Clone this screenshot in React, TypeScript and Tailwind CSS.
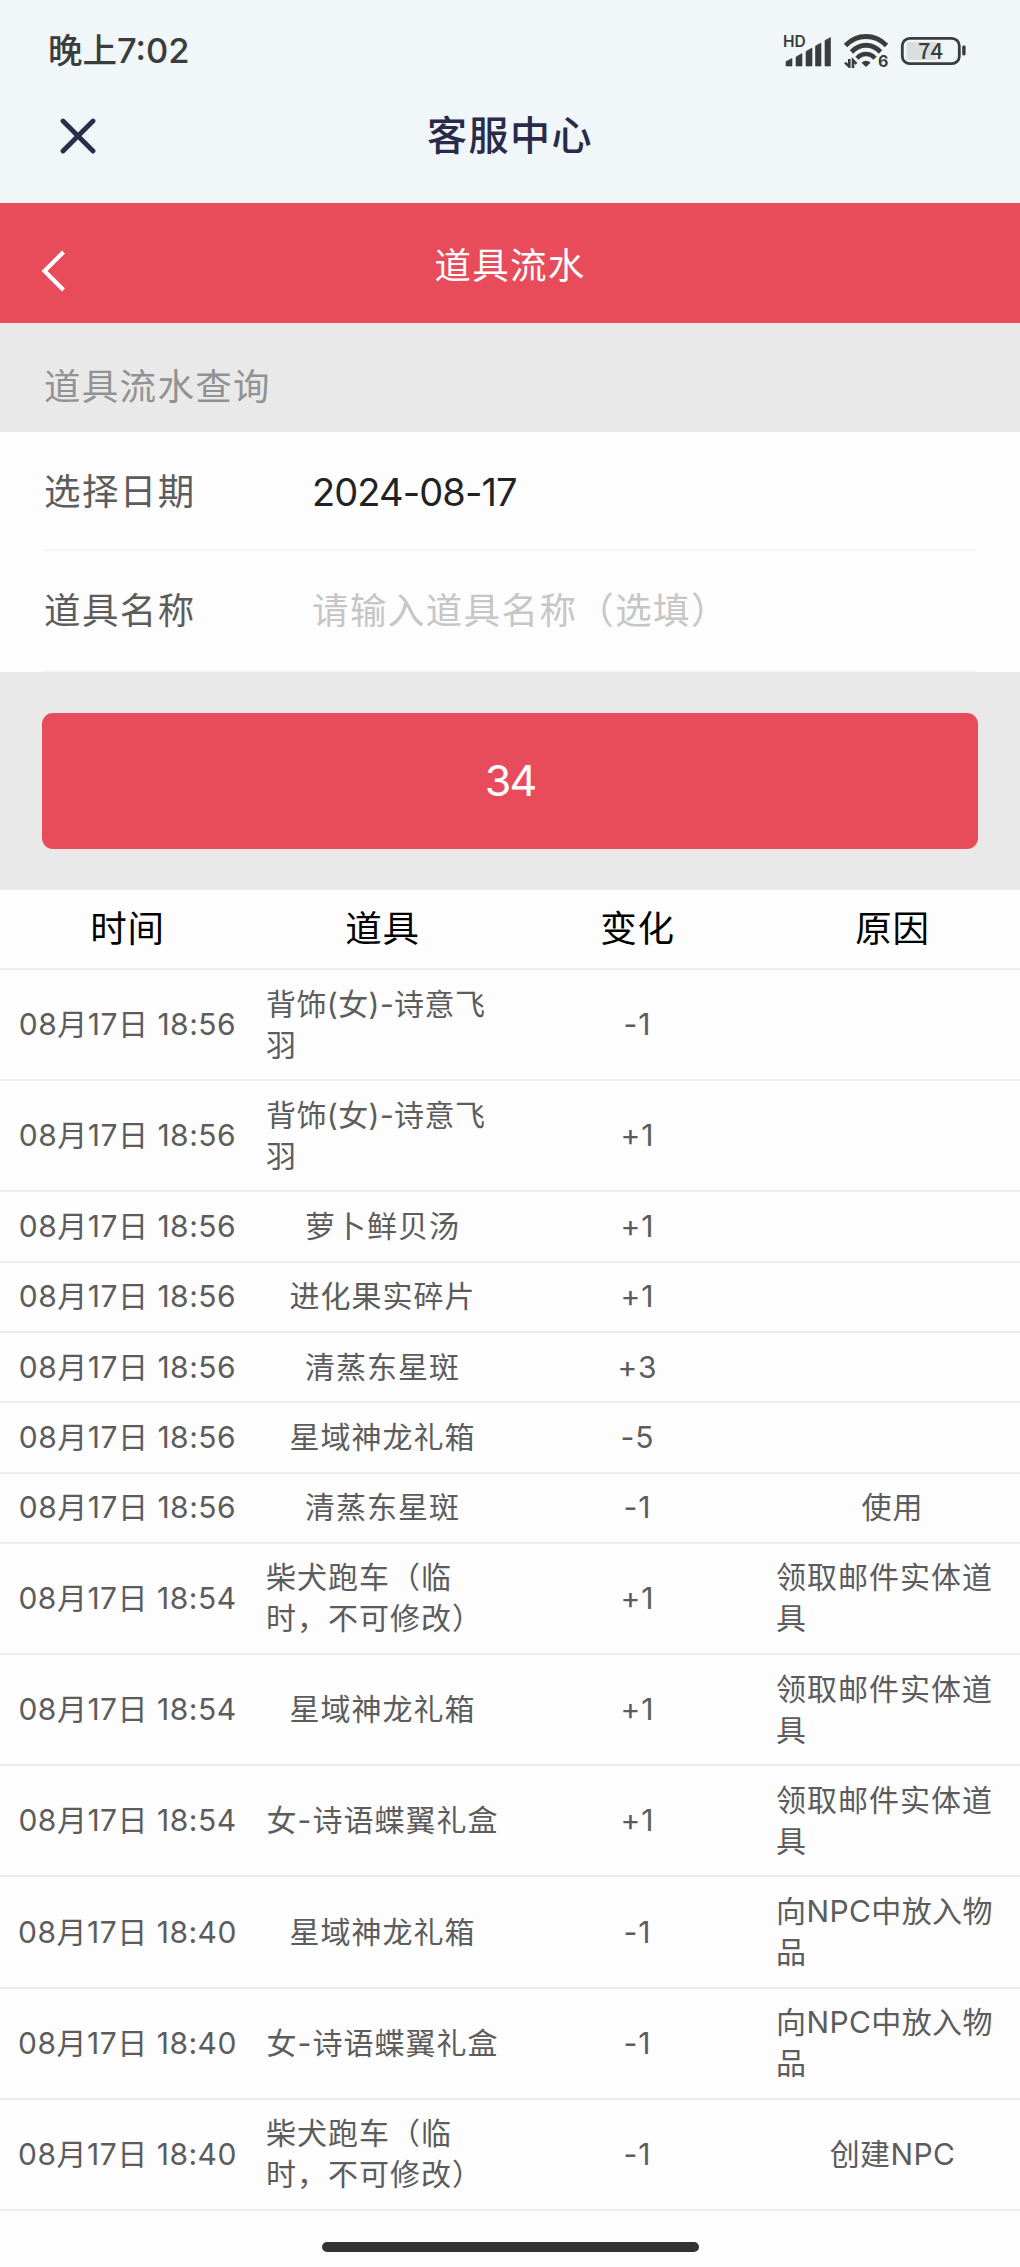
interface Registro {
  fecha:   string
  objeto:  string
  cambio:  string
  motivo?: string
}

const COLUMNAS = ['时间', '道具', '变化', '原因']

const REGISTROS: Registro[] = [
  { fecha: '08月17日 18:56', objeto: '背饰(女)-诗意飞\n羽', cambio: '-1' },
  { fecha: '08月17日 18:56', objeto: '背饰(女)-诗意飞\n羽', cambio: '+1' },
  { fecha: '08月17日 18:56', objeto: '萝卜鲜贝汤', cambio: '+1' },
  { fecha: '08月17日 18:56', objeto: '进化果实碎片', cambio: '+1' },
  { fecha: '08月17日 18:56', objeto: '清蒸东星斑', cambio: '+3' },
  { fecha: '08月17日 18:56', objeto: '星域神龙礼箱', cambio: '-5' },
  { fecha: '08月17日 18:56', objeto: '清蒸东星斑', cambio: '-1', motivo: '使用' },
  { fecha: '08月17日 18:54', objeto: '柴犬跑车（临\n时，不可修改）', cambio: '+1', motivo: '领取邮件实体道\n具' },
  { fecha: '08月17日 18:54', objeto: '星域神龙礼箱', cambio: '+1', motivo: '领取邮件实体道\n具' },
  { fecha: '08月17日 18:54', objeto: '女-诗语蝶翼礼盒', cambio: '+1', motivo: '领取邮件实体道\n具' },
  { fecha: '08月17日 18:40', objeto: '星域神龙礼箱', cambio: '-1', motivo: '向NPC中放入物\n品' },
  { fecha: '08月17日 18:40', objeto: '女-诗语蝶翼礼盒', cambio: '-1', motivo: '向NPC中放入物\n品' },
  { fecha: '08月17日 18:40', objeto: '柴犬跑车（临\n时，不可修改）', cambio: '-1', motivo: '创建NPC' },
]

function Senal() {
  return (
    <div className="relative h-[34px] w-[48px] text-[#3a3d3c]">
      <svg width="48" height="34" viewBox="0 0 48 34" fill="currentColor">
        <path d="M2 32V27.5L8 24.5V32Z M12 32V23L18 19.5V32Z M22 32V17.5L28 14V32Z M31.5 32V12L37 9V32Z M41 32V6.5L46.5 3.5V32Z" stroke="currentColor" strokeWidth="0.6" strokeLinejoin="round" />
      </svg>
      <span className="absolute -left-px -top-px text-[15.5px] font-semibold leading-[18px]">HD</span>
    </div>
  )
}

function Wifi() {
  return (
    <div className="relative h-[34px] w-[46px] text-[#3a3d3c]">
      <svg width="46" height="34" viewBox="0 0 46 34" fill="none" stroke="currentColor">
        <path d="M2.5 11.5C14 -0.5 32 -0.5 43.5 11.5" strokeWidth="4.8" />
        <path d="M8.5 18C17 9 29 9 37.5 18" strokeWidth="4.8" />
        <path d="M14 24.2C19 18.5 27 18.5 32 24.2" strokeWidth="4.6" />
        <path d="M18.5 28.7C21 26 25 26 27.5 28.7L23 33Z" fill="currentColor" stroke="none" />
        <path d="M6.3 25V32.6L2 28.6 M10 34V26.2L13.5 29.8" strokeWidth="2.6" />
      </svg>
      <span className="absolute left-[35px] top-[18px] text-[16px] font-bold leading-[18px]">6</span>
    </div>
  )
}

function Bateria() {
  return (
    <div className="relative h-[30px] w-[66px] text-[#3a3d3c]">
      <svg width="66" height="30" viewBox="0 0 66 30" fill="none">
        <rect x="2.3" y="2.3" width="57" height="25.4" rx="7.5" stroke="currentColor" strokeWidth="2.8" />
        <path d="M10 6H36V24H10Q6.5 24 6.5 20.5V9.5Q6.5 6 10 6Z" fill="#dbdedf" />
        <rect x="62.2" y="9.5" width="3.4" height="10" rx="1.4" fill="currentColor" />
      </svg>
      <span
        className="absolute left-0 top-0 w-[61px] text-center text-[22px] font-medium leading-[27px]"
        style={{ fontFamily: '"Noto Sans CJK SC", sans-serif' }}
      >
        74
      </span>
    </div>
  )
}

function Celda({ texto }: { texto?: string }) {
  return (
    <div className="flex w-[255px] items-center justify-center px-[11px]">
      {texto && (
        <span
          className={`whitespace-pre ${texto.includes('\n') ? 'w-full' : ''} ${
            /[(N]/.test(texto) ? 'tracking-[0.4px]' : ''
          }`}
        >
          {texto}
        </span>
      )}
    </div>
  )
}

export default function App() {
  return (
    <div
      className="flex h-[2267px] w-[1020px] flex-col overflow-hidden bg-[#fdfdfd]"
      style={{ fontFamily: 'Inter, "Noto Sans CJK SC", sans-serif' }}
    >
      <header className="h-[203px] shrink-0 bg-[#f1f6f9]">
        <div className="flex h-[102px] items-center justify-between pl-[48px] pr-[54px]">
          <span className="text-[34.5px] font-medium leading-none text-[#3a3d3c]">晚上7:02</span>
          <div className="flex items-center gap-[11px]">
            <Senal />
            <Wifi />
            <Bateria />
          </div>
        </div>
        <div className="grid h-[68px] grid-cols-[200px_1fr_200px] items-center">
          <button type="button" className="ml-[60px] w-9">
            <svg width="36" height="36" viewBox="0 0 36 36" fill="none" stroke="#2c2c4b" strokeWidth="4.8" strokeLinecap="round">
              <path d="M3 3L33 33M33 3L3 33" />
            </svg>
          </button>
          <h1 className="text-center text-[40px] font-medium leading-none tracking-[1.5px] text-[#282b4a]">客服中心</h1>
        </div>
      </header>

      <div className="grid h-[120px] shrink-0 grid-cols-[200px_1fr_200px] items-center bg-[#e84c5b]">
        <svg className="ml-[41px] mt-[15px]" width="24" height="42" viewBox="0 0 24 42" fill="none" stroke="#fff" strokeWidth="4.2">
          <path d="M22.5 2L3.5 21L22.5 40" />
        </svg>
        <h2 className="pt-[7px] text-center text-[36.5px] leading-none tracking-[1.2px] text-white">道具流水</h2>
      </div>

      <div className="flex h-[109px] shrink-0 items-center bg-[#e9e9e9] pl-[44px] pt-[20px] text-[36.5px] leading-none tracking-[1.3px] text-[#929292]">
        道具流水查询
      </div>

      <div className="h-[240px] shrink-0 px-[44px] text-[36.5px] leading-none tracking-[1.4px] text-[#5c5c5c]">
        <div className="flex h-[119px] items-center border-b-2 border-[#f5f5f5] pt-[3px]">
          <span className="w-[268px]">选择日期</span>
          <span className="text-[38px] tracking-[-0.9px] text-[#222]">2024-08-17</span>
        </div>
        <div className="flex h-[121px] items-center border-b-2 border-[#f5f5f5] pt-[2px]">
          <span className="w-[268px]">道具名称</span>
          <span className="text-[#c6c6c6]">请输入道具名称（选填）</span>
        </div>
      </div>

      <div className="h-[218px] shrink-0 bg-[#e9e9e9] px-[42px] pt-[41px]">
        <button type="button" className="flex h-[136px] w-full items-center justify-center rounded-[11px] bg-[#e84c5b] pb-[2px] text-[43px] tracking-[-2px] text-white">
          34
        </button>
      </div>

      <div className="flex h-[80px] shrink-0 items-center border-b-2 border-[#ededed] text-[36.5px] leading-none tracking-[0.8px] text-black">
        {COLUMNAS.map(c => (
          <div key={c} className="w-[255px] text-center">{c}</div>
        ))}
      </div>

      <div className="shrink-0 text-[30px] leading-[41px] tracking-[1px] text-[#5c5c5c]">
        {REGISTROS.map((r, i) => (
          <div
            key={i}
            className={`flex border-b-2 border-[#ededed] ${
              (r.objeto + (r.motivo ?? '')).includes('\n') ? 'h-[111.2px]' : 'h-[70.3px]'
            }`}
          >
            <div className="flex w-[255px] items-center justify-center whitespace-pre tracking-[0.5px]">{r.fecha}</div>
            <Celda texto={r.objeto} />
            <Celda texto={r.cambio} />
            <Celda texto={r.motivo} />
          </div>
        ))}
      </div>

      <div className="mx-auto mt-[31px] h-[10px] w-[377px] shrink-0 rounded-full bg-[#333]" />
    </div>
  )
}
